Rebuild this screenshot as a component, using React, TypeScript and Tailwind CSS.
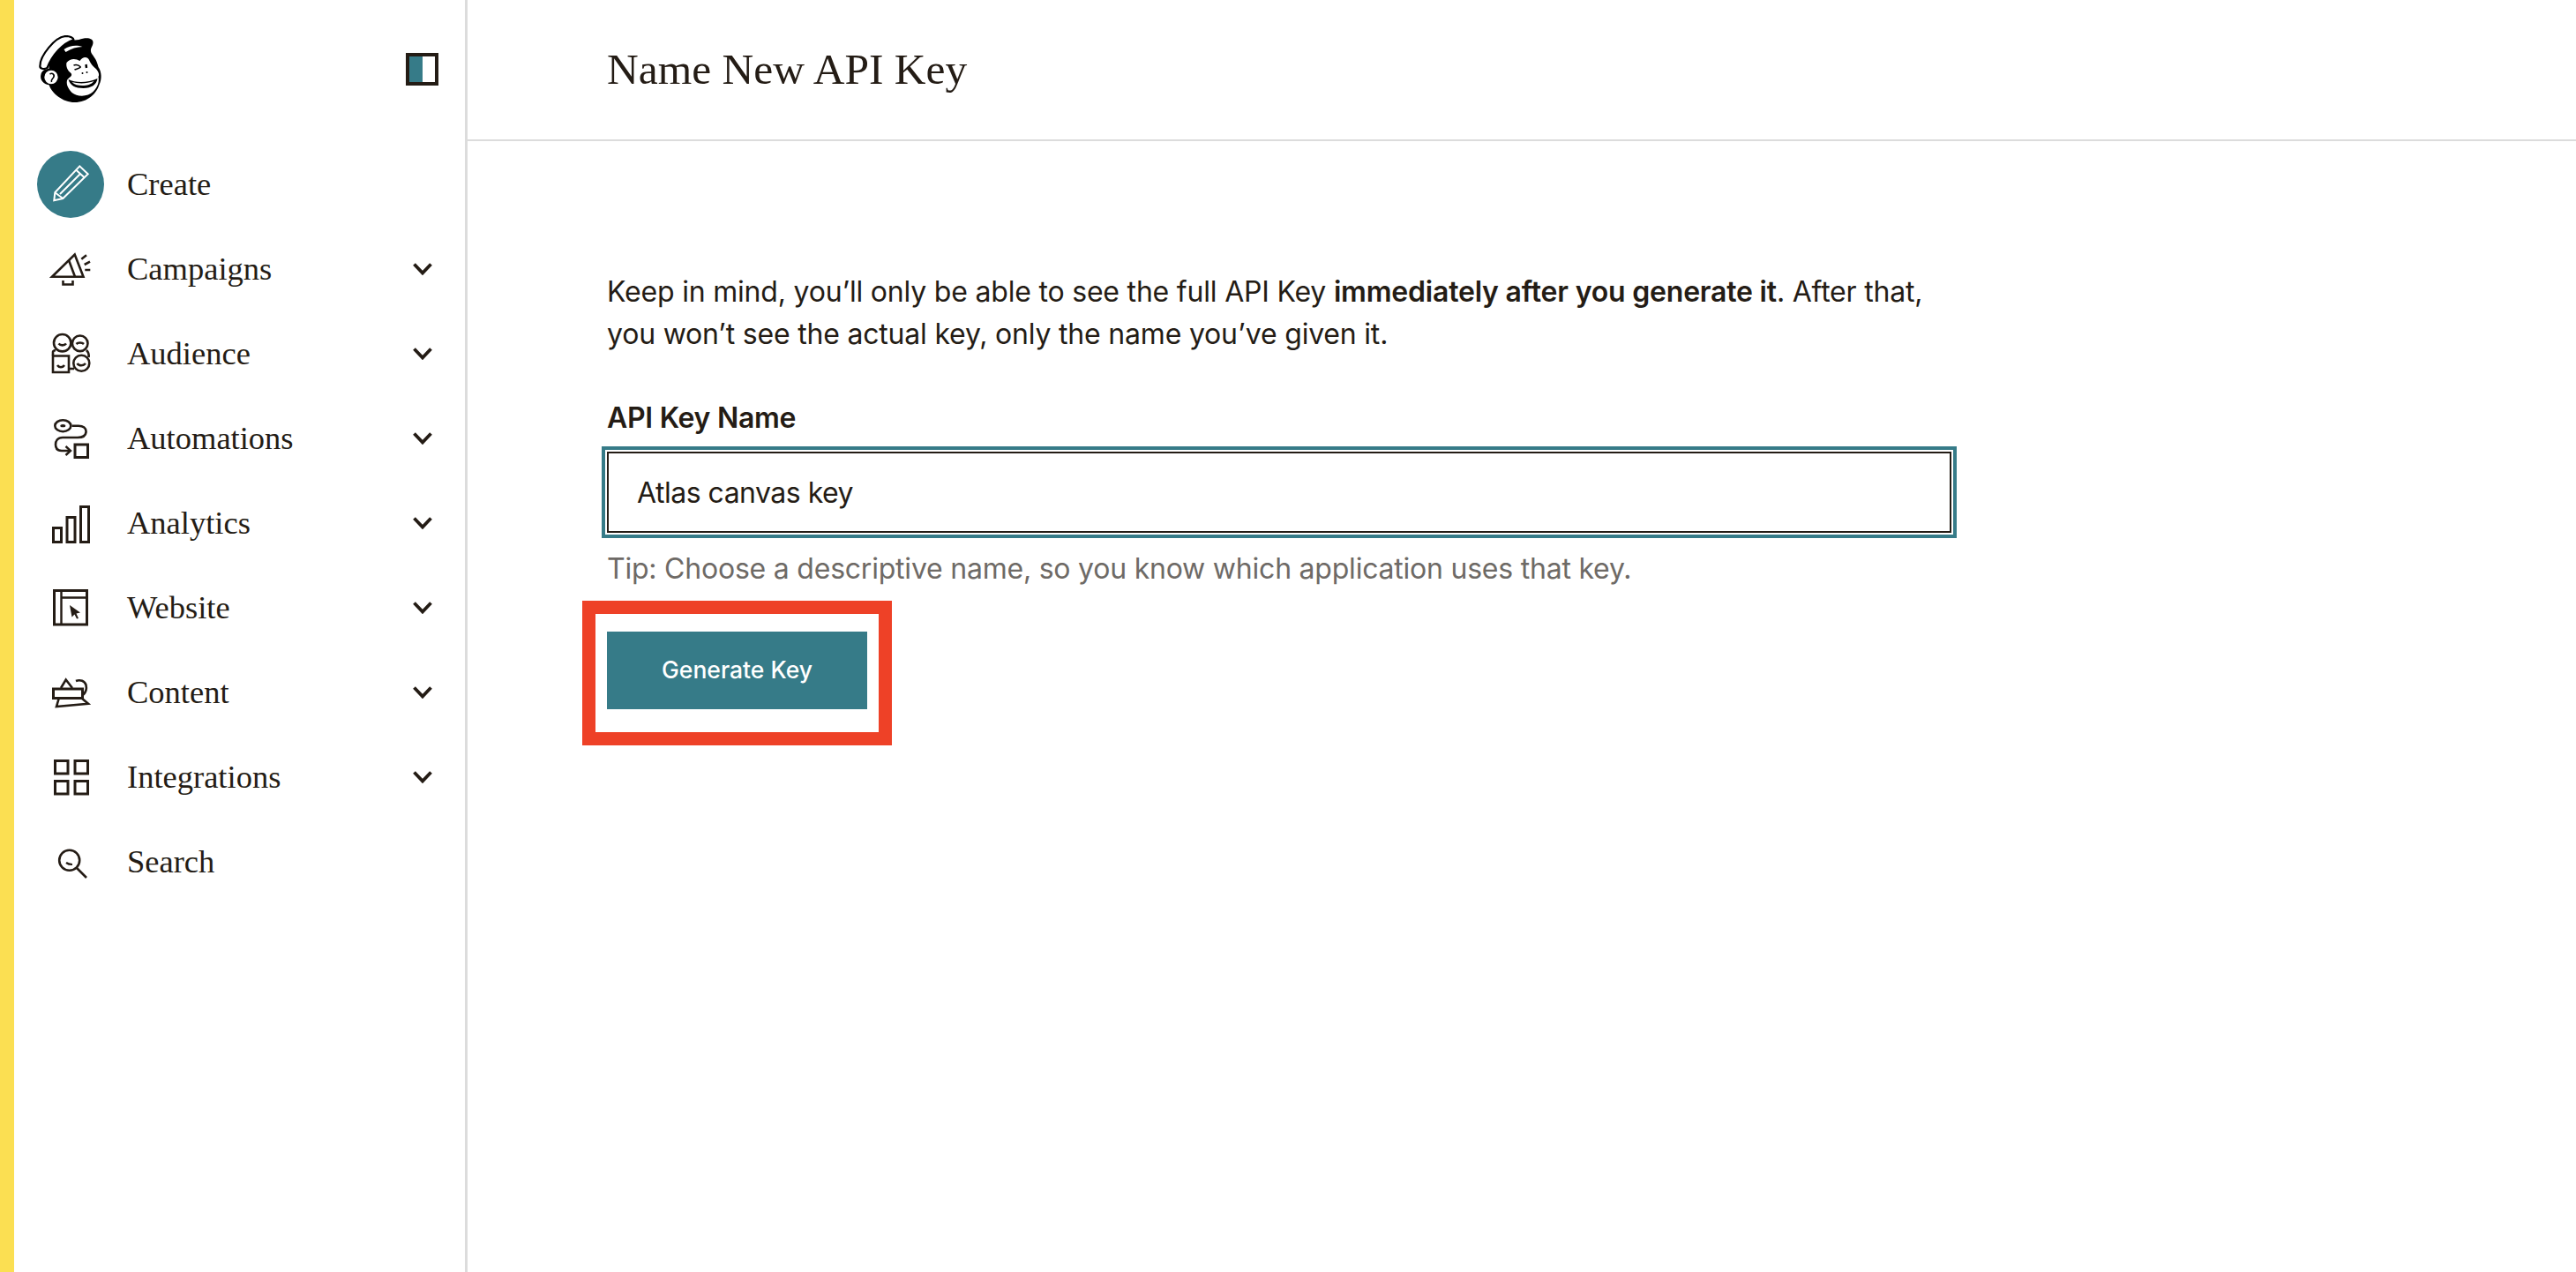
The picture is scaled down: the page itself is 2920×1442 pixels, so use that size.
import type { ReactNode } from 'react'

const serif = "font-['Liberation_Serif',serif]"

function Icon({ children }: { children: ReactNode }) {
  return (
    <svg viewBox="0 0 48 48" fill="none" stroke="#241c15" strokeWidth="2.6" className="w-12 h-12">
      {children}
    </svg>
  )
}

function Monkey() {
  return (
    <svg viewBox="0 0 72 78" className="w-[73px] h-[78px]">
      {/* head */}
      <path d="M20 12C30 4 40 6 46 5C54 2 62 3 62 8C62 13 58 14 60 20C63 25 66 27 68 36C72 42 72 50 69 56C66 66 56 76 41 76C28 76 15 66 12 56C6 56 1 50 3 44C4 40 8 38 12 38C12 28 14 18 20 12Z" fill="#000" />
      {/* cap visor */}
      <path d="M2 34C2 24 18 2 31 1C36 1 40 3 40 5C28 9 16 22 10 37C6 39 1 38 2 34Z" fill="#fff" stroke="#000" strokeWidth="2.2" />
      {/* hair streak */}
      <path d="M29 16C36 11 44 11 50 13C44 13 37 15 31 19Z" fill="#fff" />
      {/* ear */}
      <circle cx="14.5" cy="47.5" r="8.5" fill="#fff" stroke="#000" strokeWidth="1.6" />
      <path d="M13 44C16 42 19 45 17 48C16 50 14 50 15 53" fill="none" stroke="#000" strokeWidth="1.6" />
      {/* face */}
      <path d="M32 31C36 26 42 26 47 29C50 24 55 24 57 27C59 31 60 33 63 36C67 39 70 44 68 47C69 52 68 58 62 64C56 70 44 70 38 65C33 60 31 54 33 50C36 47 39 46 37 43C33 40 31 35 32 31Z" fill="#fff" />
      {/* wink */}
      <path d="M40 34C43 33 46 34 48 36M41 39C43 38 46 38 48 36" fill="none" stroke="#000" strokeWidth="1.6" />
      <path d="M54 33L54.5 37" stroke="#000" strokeWidth="2.4" />
      <circle cx="50" cy="43" r="1" fill="#000" />
      <circle cx="55" cy="42" r="1" fill="#000" />
      {/* mouth */}
      <path d="M34 50C42 54 56 54 67 49C66 56 60 60 51 60C42 60 36 57 34 50Z" fill="#000" />
      <path d="M38 53C45 55 55 55 63 52C60 56 55 57 50 57C45 57 41 56 38 53Z" fill="#fff" />
    </svg>
  )
}

const nav: { label: string; chevron: boolean; icon: ReactNode }[] = [
  {
    label: 'Campaigns',
    chevron: true,
    icon: (
      <Icon>
        <path d="M3 32.7L28.7 7.5L38.5 32.7Z" />
        <path d="M22 14L29 32.7" />
        <path d="M15.5 37V41.5H26.5V37" />
        <path d="M36.3 12.7L42 8.3M39.7 19L46 15.7M40.3 25H46.3" />
      </Icon>
    ),
  },
  {
    label: 'Audience',
    chevron: true,
    icon: (
      <Icon>
        <circle cx="14.7" cy="11.7" r="9.7" />
        <circle cx="34.7" cy="12.3" r="8.8" />
        <circle cx="36.3" cy="34.7" r="9" />
        <path d="M4 26.5H22V45H4Z" />
        <path d="M4 26V22C4 21 5 20.5 7 20M42 20C44 22 45 25 44.5 28M22 41H28" />
        <path d="M10.5 12.5C12.5 15 17 15 19 12.5M30.5 13C32.5 11 37 11 39 13M31.5 35C33.5 38 38.5 38 41 35M9 37C11 40 15 40 17 37" />
      </Icon>
    ),
  },
  {
    label: 'Automations',
    chevron: true,
    icon: (
      <Icon>
        <ellipse cx="15.3" cy="9.7" rx="9" ry="6.5" />
        <ellipse cx="15.3" cy="9.7" rx="3" ry="1.6" fill="#241c15" stroke="none" />
        <path d="M25.5 9.7H33C38 9.7 42 12 41.5 17C41 22 37 23 32 23H15C9 23 7 27 7 31C7 35 9 38 14 38H22" />
        <path d="M18.5 33L24 38L18.5 43" strokeWidth="2.4" />
        <rect x="29" y="31" width="14.5" height="14.5" strokeWidth="3" />
      </Icon>
    ),
  },
  {
    label: 'Analytics',
    chevron: true,
    icon: (
      <Icon>
        <g strokeWidth="3">
          <rect x="4.5" y="29.5" width="9" height="16" />
          <rect x="20" y="17.5" width="9" height="28" />
          <rect x="35.5" y="5.5" width="9" height="40" />
        </g>
      </Icon>
    ),
  },
  {
    label: 'Website',
    chevron: true,
    icon: (
      <Icon>
        <g strokeWidth="3">
          <rect x="5.5" y="4.5" width="37" height="38.5" />
          <path d="M13.5 4.5V43M13.5 12.5H42.5" strokeWidth="2.4" />
        </g>
        <path d="M23 21L35 29.5L30.5 30.5L33 36L31 36.5L28.5 31.5L25.5 34.5Z" fill="#241c15" stroke="none" />
      </Icon>
    ),
  },
  {
    label: 'Content',
    chevron: true,
    icon: (
      <Icon>
        <rect x="4.5" y="20" width="33" height="10.5" strokeWidth="3" />
        <path d="M13 19L18.7 9.5L26 19" />
        <path d="M30 11C35 9 40 11 41.5 15.5C42.5 20 41 24 38.5 26.5" />
        <path d="M10.5 31.5L8 40L44 36.8L36 30" />
      </Icon>
    ),
  },
  {
    label: 'Integrations',
    chevron: true,
    icon: (
      <Icon>
        <g strokeWidth="3">
          <rect x="6.5" y="5.5" width="14.5" height="14.5" />
          <rect x="29" y="5.5" width="14.5" height="14.5" />
          <rect x="6.5" y="28.5" width="14.5" height="14.5" />
          <rect x="29" y="28.5" width="14.5" height="14.5" />
        </g>
      </Icon>
    ),
  },
  {
    label: 'Search',
    chevron: false,
    icon: (
      <Icon>
        <circle cx="22.7" cy="22.3" r="11.5" />
        <path d="M31 31L42 42" />
        <path d="M19 25C21 26.5 23 27 26 27" strokeWidth="2.2" />
      </Icon>
    ),
  },
]

function NavRow({ label, chevron, icon }: { label: string; chevron: boolean; icon: ReactNode }) {
  return (
    <div className="flex items-center h-24">
      <div className="w-[76px] flex justify-center">{icon}</div>
      <span className={`ml-[26px] text-[36.5px] text-[#241c15] ${serif}`}>{label}</span>
      {chevron && (
        <svg viewBox="0 0 22 14" fill="none" stroke="#241c15" strokeWidth="3.8" className="ml-auto w-[22px] h-[14px]">
          <path d="M1.5 1.5L11 11.5L20.5 1.5" />
        </svg>
      )}
    </div>
  )
}

export default function App() {
  return (
    <div className="flex h-screen bg-white font-['Inter',sans-serif] text-[#241c15] overflow-hidden">
      <aside className="w-[530px] shrink-0 border-l-[16px] border-l-[#fbdf52] border-r-[3px] border-r-[#dcdcdc] pl-[26px] pr-[37px]">
        <div className="flex items-center justify-between h-[161px] pl-[1px] pb-[4px]">
          <Monkey />
          <div className="w-[37px] h-[37px] mr-[-7px] border-4 border-[#241c15] flex">
            <div className="w-1/2 bg-[#367b88]" />
          </div>
        </div>
        {/* Create */}
        <div className="flex items-center h-24">
          <div className="w-[76px] h-[76px] rounded-full bg-[#367b88] flex items-center justify-center">
            <svg viewBox="0 0 74 76" fill="none" stroke="#fff" strokeWidth="2" className="w-[74px] h-[76px]">
              <path d="M19.3 47.3L47.3 17.3L56.7 26.3L28.3 54L18.3 56.3Z" />
              <path d="M43.3 21.7L52.7 30.3M25 49L48.3 25.7M19.3 47.3L28.3 54" />
            </svg>
          </div>
          <span className={`ml-[26px] text-[36.5px] ${serif}`}>Create</span>
        </div>
        {nav.map((n) => (
          <NavRow key={n.label} {...n} />
        ))}
      </aside>

      <main className="flex-1">
        <header className="h-[160px] border-b-2 border-[#dcdcdc] flex items-center pl-[158px]">
          <h1 className={`text-[49.5px] font-normal ${serif}`}>Name New API Key</h1>
        </header>
        <div className="pl-[158px] pt-[147px] w-[1682px]">
          <p className="text-[32px] leading-[48px] tracking-[-0.2px]">
            Keep in mind, you’ll only be able to see the full API Key <strong className="font-semibold">immediately after you generate it</strong>. After that, you won’t see the actual key, only the name you’ve given it.
          </p>
          <label className="block mt-[47px] text-[32px] leading-[48px] font-semibold tracking-[-0.3px]">API Key Name</label>
          <input
            readOnly
            value="Atlas canvas key"
            className="block mt-[14px] w-full h-[92px] px-[32px] border-2 border-[#241c15] text-[32px] tracking-[-0.5px] outline-none shadow-[0_0_0_2px_#fff,0_0_0_6px_#367b88]"
          />
          <p className="mt-[17px] text-[32px] leading-[48px] tracking-[-0.22px] text-[#6e6a66]">
            Tip: Choose a descriptive name, so you know which application uses that key.
          </p>
          <div className="relative mt-[47px] w-[295px]">
            <button className="w-full h-[88px] bg-[#367b88] text-white text-[26.5px] font-medium">Generate Key</button>
            <div className="absolute top-[-35px] left-[-28px] w-[351px] h-[164px] border-[15px] border-[#ee4127]" />
          </div>
        </div>
      </main>
    </div>
  )
}
